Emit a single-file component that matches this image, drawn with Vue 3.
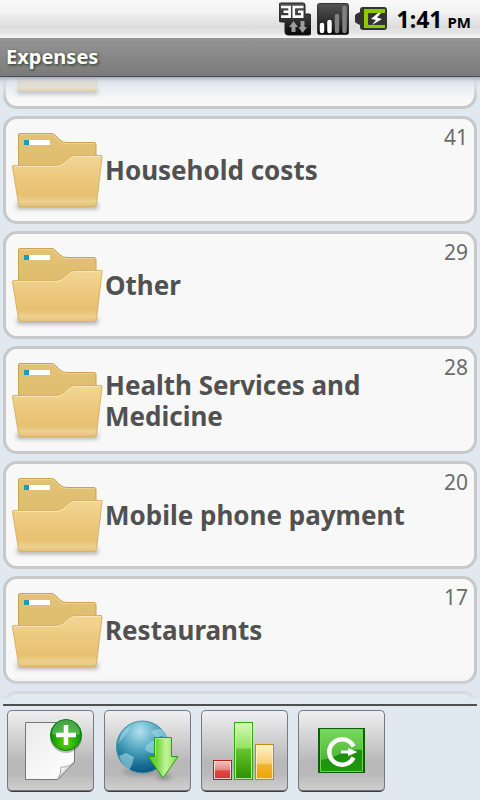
<script setup>
import { onMounted, ref } from 'vue'

const categories = [
  { id: 1, name: '', count: '' },
  { id: 2, name: 'Household costs', count: 41 },
  { id: 3, name: 'Other', count: 29 },
  { id: 4, name: 'Health Services and Medicine', count: 28 },
  { id: 5, name: 'Mobile phone payment', count: 20 },
  { id: 6, name: 'Restaurants', count: 17 },
  { id: 7, name: '', count: '' },
]

const list = ref(null)

onMounted(() => {
  list.value.scrollTop = 76
})
</script>

<template>
  <div class="screen">
    <svg class="defs" width="0" height="0" aria-hidden="true">
      <defs>
        <linearGradient id="folderBack" x1="0" y1="0" x2="0" y2="1">
          <stop offset="0" stop-color="#e3c277" />
          <stop offset="1" stop-color="#dcb762" />
        </linearGradient>
        <linearGradient id="folderFront" x1="0" y1="0" x2="0" y2="1">
          <stop offset="0" stop-color="#f3d695" />
          <stop offset=".4" stop-color="#edca80" />
          <stop offset=".78" stop-color="#e8c171" />
          <stop offset=".9" stop-color="#ebd08f" />
          <stop offset="1" stop-color="#e5c277" />
        </linearGradient>
        <filter id="soft" x="-20%" y="-100%" width="140%" height="300%">
          <feGaussianBlur stdDeviation="2" />
        </filter>
      </defs>
    </svg>

    <header class="status">
      <svg width="32" height="34" viewBox="0 0 32 34" aria-label="3G data">
        <defs>
          <linearGradient id="dark" x1="0" y1="0" x2="0" y2="1">
            <stop offset="0" stop-color="#555" />
            <stop offset=".5" stop-color="#333" />
            <stop offset="1" stop-color="#050505" />
          </linearGradient>
        </defs>
        <path d="M2 1H24Q26 1 26 3V12H30Q32 12 32 14V31Q32 33 30 33H9Q6 33 6 30V20H2Q0 20 0 18V3Q0 1 2 1Z" fill="url(#dark)" stroke="#222" />
        <path d="M2 5H10.600V14.600H2M4.500 9.800H10M24.500 5H14.800V14.600H23.200V9.800H19" fill="none" stroke="#fff" stroke-width="2.600" />
        <path d="M14.500 19L19 25H16.500V30H12.500V25H10ZM21.500 19H25.500V25H28L23.500 31L19.500 25H21.500Z" fill="#9c9c9c" />
      </svg>
      <svg width="32" height="34" viewBox="0 0 32 34" aria-label="Signal strength">
        <rect x=".5" y="1.500" width="31" height="31" rx="2" fill="url(#dark)" stroke="#333" />
        <g stroke-width="4.500" stroke-linecap="round">
          <path d="M5 23V29M12.500 20V29" stroke="#fff" />
          <path d="M20 14V29M27.500 6V29" stroke="#808080" />
        </g>
      </svg>
      <svg width="32" height="34" viewBox="0 0 32 34" aria-label="Battery charging">
        <path d="M8 5H29Q32 5 32 8V25Q32 28 29 28H8Q5 28 5 25V23L1 21Q0 20 0 19V14Q0 13 1 12L5 10V8Q5 5 8 5Z" fill="#333" />
        <path d="M9 7H30V26H9Z" fill="#8fca00" />
        <path d="M14 11H32V23H14Q13 23 13 22V12Q13 11 14 11Z" fill="#333" />
        <path d="M23 11L16 17L21 18L17 23L27 17L22 15.500L26 11Z" fill="#fff" />
      </svg>
      <time class="clock">
        <span class="hour">1:41</span>
        <span class="half">PM</span>
      </time>
    </header>

    <h1 class="title">Expenses</h1>

    <main class="viewport">
      <ul ref="list" class="list">
        <li v-for="c in categories" :key="c.id" class="card">
          <svg class="folder" width="96" height="96" viewBox="0 0 96 96" aria-hidden="true">
            <rect x="8" y="81" width="81" height="6" fill="#666" opacity=".5" filter="url(#soft)" />
            <path d="M9.500 80V13Q9.500 11.500 11 11.500H43Q45 11.500 47 14L51 18Q54 20.500 58 20.500H85Q87 20.500 87 22.500V80Z" fill="url(#folderBack)" stroke="#c9a352" />
            <path d="M11 12.500H43Q45 12.500 46 15L50 19Q53 21.500 58 21.500H86" fill="none" stroke="#f0d89d" opacity=".7" />
            <rect x="15" y="18" width="26" height="5" fill="#fff" />
            <rect x="15" y="18" width="5" height="5" fill="#2198bd" />
            <path d="M4.500 43.500H47Q51 43.500 54 41L60 36Q63 33.500 67 33.500H92Q93.500 33.500 93 35L87.500 82Q87 84.500 84 84.500H13Q10 84.500 9.500 82L3.500 45Q3.300 43.500 4.500 43.500Z" fill="url(#folderFront)" stroke="#d8b365" />
            <path d="M5 44.500H48Q52 44 55 41.500L60 37Q63 34.500 67 34.500H92" fill="none" stroke="#f9e5b3" />
          </svg>
          <span class="name">{{ c.name }}</span>
          <span class="count">{{ c.count }}</span>
        </li>
      </ul>
    </main>

    <nav class="toolbar">
      <button type="button" class="tool" aria-label="New record">
        <svg width="87" height="82" viewBox="0 0 87 82">
          <defs>
            <linearGradient id="paper" x1="0" y1="0" x2="1" y2="1">
              <stop offset="0" stop-color="#e8eae8" />
              <stop offset=".7" stop-color="#fafafa" />
            </linearGradient>
            <radialGradient id="plus" cx=".5" cy=".75" r=".7">
              <stop offset="0" stop-color="#5ed400" />
              <stop offset=".6" stop-color="#15a30b" />
              <stop offset="1" stop-color="#078409" />
            </radialGradient>
            <linearGradient id="curl" x1="0" y1="0" x2="1" y2="1">
              <stop offset="0" stop-color="#777" />
              <stop offset=".3" stop-color="#fff" />
              <stop offset=".6" stop-color="#bbb" />
            </linearGradient>
          </defs>
          <path d="M18.500 12.500H67.500V52L51 69.500H18.500Z" fill="url(#paper)" stroke="#777" />
          <path d="M51 69Q54 64 54 57Q60 58 67 52.500Z" fill="url(#curl)" stroke="#888" stroke-width=".7" />
          <circle cx="59" cy="27" r="16" fill="#444" opacity=".35" />
          <circle cx="59" cy="25" r="15.500" fill="url(#plus)" stroke="#087b0a" />
          <path d="M45 24A14 14 0 0 1 73 24Q59 30 45 24Z" fill="#fff" opacity=".25" />
          <path d="M59 15V35M49 25H69" stroke="#fff" stroke-width="4.500" />
        </svg>
      </button>
      <button type="button" class="tool" aria-label="Download">
        <svg width="87" height="82" viewBox="0 0 87 82">
          <defs>
            <radialGradient id="globe" cx=".45" cy=".2" r=".85">
              <stop offset="0" stop-color="#b4e2ee" />
              <stop offset=".4" stop-color="#55a9c3" />
              <stop offset=".75" stop-color="#1a6f94" />
              <stop offset="1" stop-color="#075079" />
            </radialGradient>
            <linearGradient id="arrow" x1="0" y1="0" x2="1" y2="0">
              <stop offset="0" stop-color="#55c71e" />
              <stop offset=".3" stop-color="#72d63d" />
              <stop offset=".6" stop-color="#c3f49c" />
              <stop offset="1" stop-color="#7ede42" />
            </linearGradient>
          </defs>
          <ellipse cx="38" cy="62" rx="20" ry="4" fill="#555" opacity=".3" filter="url(#soft)" />
          <ellipse cx="60" cy="67" rx="8" ry="3" fill="#333" opacity=".3" filter="url(#soft)" />
          <circle cx="38.500" cy="37" r="26" fill="url(#globe)" stroke="#3d91ae" />
          <path d="M17 25Q20 19 26 16L24 22L18 29L14 34ZM15 46L22 43L30 47L28 55L25 60Q18 55 15 46ZM47 22Q52 17 59 20L63 28L57 26L52 28ZM42 36L48 31L56 32V43L47 43L41 40Z" fill="#a5dae8" opacity=".6" />
          <path d="M50.500 27.500H67.500V46.500H74L59 68L44 46.500H50.500Z" fill="url(#arrow)" stroke="#269f12" />
          <path d="M51.500 45V28.500H66.500" fill="none" stroke="#bcf098" opacity=".8" />
        </svg>
      </button>
      <button type="button" class="tool" aria-label="Statistics">
        <svg width="87" height="82" viewBox="0 0 87 82">
          <defs>
            <linearGradient id="red" x1="0" y1="0" x2="0" y2="1">
              <stop offset="0" stop-color="#f7c7bf" />
              <stop offset=".48" stop-color="#e8867e" />
              <stop offset=".55" stop-color="#dc4742" />
              <stop offset="1" stop-color="#d83631" />
            </linearGradient>
            <linearGradient id="green" x1="0" y1="0" x2="0" y2="1">
              <stop offset="0" stop-color="#d7fab5" />
              <stop offset=".44" stop-color="#96e261" />
              <stop offset=".47" stop-color="#65c62e" />
              <stop offset="1" stop-color="#299000" />
            </linearGradient>
            <linearGradient id="gold" x1="0" y1="0" x2="0" y2="1">
              <stop offset="0" stop-color="#fff1c9" />
              <stop offset=".53" stop-color="#f7d177" />
              <stop offset=".58" stop-color="#efb434" />
              <stop offset="1" stop-color="#eda300" />
            </linearGradient>
          </defs>
          <g fill="none">
            <rect x="12.500" y="50.500" width="18" height="19" fill="url(#red)" stroke="#ce1512" />
            <rect x="13.500" y="51.500" width="16" height="17" stroke="#fff" opacity=".75" />
            <rect x="33.500" y="12.500" width="18" height="57" fill="url(#green)" stroke="#2fa60c" />
            <rect x="34.500" y="13.500" width="16" height="55" stroke="#efffdd" opacity=".75" />
            <rect x="54.500" y="34.500" width="18" height="35" fill="url(#gold)" stroke="#c58a04" />
            <rect x="55.500" y="35.500" width="16" height="33" stroke="#fff5d6" opacity=".75" />
          </g>
        </svg>
      </button>
      <button type="button" class="tool" aria-label="Exit">
        <svg width="87" height="82" viewBox="0 0 87 82">
          <defs>
            <linearGradient id="exit" x1="0" y1="0" x2="0" y2="1">
              <stop offset="0" stop-color="#7bd961" />
              <stop offset="1" stop-color="#3da925" />
            </linearGradient>
            <linearGradient id="exitLow" x1="0" y1="0" x2="0" y2="1">
              <stop offset="0" stop-color="#1f8a10" />
              <stop offset="1" stop-color="#1f9a0c" />
            </linearGradient>
          </defs>
          <rect x="20" y="18" width="47" height="45" fill="#135c0d" />
          <rect x="22" y="19" width="43" height="43" fill="url(#exit)" />
          <path d="M23 50Q32 49 42 44Q53 39 64 40V61H23Z" fill="url(#exitLow)" />
          <path d="M22.500 19.500H64.500V61.500H22.500Z" fill="none" stroke="#70d257" />
          <path d="M55.500 36.500A12.700 12.700 0 1 0 55.500 47.500" fill="none" stroke="#fff" stroke-width="4.500" />
          <path d="M43 40.500H50V38L59.500 42L50 46V43.500H43Z" fill="#fff" />
        </svg>
      </button>
    </nav>
  </div>
</template>

<style>
body {
  margin: 0;
}
</style>

<style scoped>
.screen {
  display: flex;
  flex-direction: column;
  height: 100vh;
  background: #e0e8f0;
  font-family: "Noto Sans", "Open Sans", sans-serif;
}
.defs {
  position: absolute;
}
.status {
  display: flex;
  flex: none;
  align-items: center;
  justify-content: flex-end;
  gap: 6px;
  box-sizing: border-box;
  height: 38px;
  padding: 0 9px 0 0;
  background: linear-gradient(#fafafa 0%, #f2f3f2 30%, #dcdddc 70%, #e4e5e4 88%, #f8f8f8 100%);
}
.clock {
  display: flex;
  align-items: baseline;
  gap: 5px;
  margin-left: 4px;
  color: #000;
  font-weight: 700;
}
.hour {
  font-size: 23px;
}
.half {
  font-size: 15px;
}
.title {
  z-index: 1;
  flex: none;
  box-sizing: border-box;
  height: 39px;
  margin: 0;
  padding: 0 6px;
  border-bottom: 1px solid #4c4d50;
  background: linear-gradient(#949594, #797a79);
  color: #fff;
  font-size: 20px;
  font-weight: 700;
  line-height: 37px;
  text-shadow: 1px 1px 3px #223022;
}
.viewport {
  position: relative;
  flex: 1;
  min-height: 0;
}
.viewport::before,
.viewport::after {
  position: absolute;
  right: 0;
  left: 0;
  z-index: 1;
  content: "";
  pointer-events: none;
}
.viewport::before {
  top: 0;
  height: 22px;
  background: linear-gradient(#a5adba 0, rgba(212, 218, 230, 0.85) 4px, rgba(224, 232, 240, 0.7) 10px, rgba(224, 232, 240, 0) 100%);
}
.viewport::after {
  bottom: 0;
  height: 22px;
  background: linear-gradient(rgba(224, 232, 240, 0), rgba(222, 227, 236, 0.8));
}
.list {
  display: flex;
  flex-direction: column;
  gap: 7px;
  height: 100%;
  margin: 0;
  padding: 0 3px;
  overflow-y: auto;
  list-style: none;
  scrollbar-width: none;
}
.card {
  display: flex;
  flex: none;
  align-items: center;
  box-sizing: border-box;
  height: 108px;
  padding: 0 6px 0 3px;
  border: 3px solid #c8c8c8;
  border-radius: 14px;
  background: #f8f8f8;
}
.folder {
  flex: none;
}
.name {
  flex: 1;
  padding-top: 1px;
  color: #505150;
  font-size: 26px;
  font-weight: 700;
  line-height: 31px;
}
.count {
  align-self: flex-start;
  width: 54px;
  padding-top: 3px;
  color: #6b6c6b;
  font-size: 21px;
  line-height: 30px;
  text-align: right;
}
.toolbar {
  display: flex;
  flex: none;
  gap: 10px;
  margin: 6px 3px 0;
  padding: 4px 4px 8px;
  border-top: 2px solid #4d504f;
}
.tool {
  box-sizing: border-box;
  width: 87px;
  height: 82px;
  padding: 0;
  overflow: hidden;
  border: 1px solid #777a80;
  border-bottom-color: #3c3d3f;
  border-radius: 5px;
  background: linear-gradient(#eff0ef 0%, #d4d5d4 30%, #b6b7b6 65%, #b9bab9 80%, #d0d1d0 100%);
  box-shadow: inset 0 -1px #707172;
}
.tool svg {
  display: block;
  margin: -1px;
}
</style>
